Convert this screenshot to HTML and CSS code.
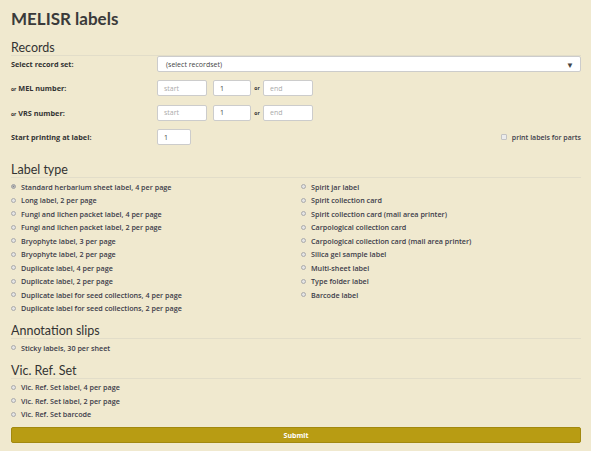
FILE: index.html
```html
<!DOCTYPE html>
<html>
<head>
<meta charset="utf-8">
<link rel="stylesheet" href="styles.css">
</head>
<body>
<div class="page">
  <h1 class="title">MELISR labels</h1>
  <form class="form">
    <h2 class="section">Records</h2>
    <div class="fields">
      <div class="row">
        <label class="lbl">Select record set:</label>
        <div class="select"><span>(select recordset)</span><span class="arrow">&#9660;</span></div>
      </div>
      <div class="row">
        <label class="lbl"><small>or</small> MEL number:</label>
        <div class="inline">
          <span class="box w50 ph">start</span>
          <span class="box w38">1</span>
          <small class="or">or</small>
          <span class="box w50 ph">end</span>
        </div>
      </div>
      <div class="row">
        <label class="lbl"><small>or</small> VRS number:</label>
        <div class="inline">
          <span class="box w50 ph">start</span>
          <span class="box w38">1</span>
          <small class="or">or</small>
          <span class="box w50 ph">end</span>
        </div>
      </div>
      <div class="row">
        <label class="lbl">Start printing at label:</label>
        <div class="inline grow">
          <span class="box w34">1</span>
          <label class="check"><span class="cb"></span>print labels for parts</label>
        </div>
      </div>
    </div>

    <h2 class="section gap">Label type</h2>
    <div class="radios cols">
      <div class="col">
        <label class="radio"><span class="rb on"></span>Standard herbarium sheet label, 4 per page</label>
        <label class="radio"><span class="rb"></span>Long label, 2 per page</label>
        <label class="radio"><span class="rb"></span>Fungi and lichen packet label, 4 per page</label>
        <label class="radio"><span class="rb"></span>Fungi and lichen packet label, 2 per page</label>
        <label class="radio"><span class="rb"></span>Bryophyte label, 3 per page</label>
        <label class="radio"><span class="rb"></span>Bryophyte label, 2 per page</label>
        <label class="radio"><span class="rb"></span>Duplicate label, 4 per page</label>
        <label class="radio"><span class="rb"></span>Duplicate label, 2 per page</label>
        <label class="radio"><span class="rb"></span>Duplicate label for seed collections, 4 per page</label>
        <label class="radio"><span class="rb"></span>Duplicate label for seed collections, 2 per page</label>
      </div>
      <div class="col">
        <label class="radio"><span class="rb"></span>Spirit jar label</label>
        <label class="radio"><span class="rb"></span>Spirit collection card</label>
        <label class="radio"><span class="rb"></span>Spirit collection card (mail area printer)</label>
        <label class="radio"><span class="rb"></span>Carpological collection card</label>
        <label class="radio"><span class="rb"></span>Carpological collection card (mail area printer)</label>
        <label class="radio"><span class="rb"></span>Silica gel sample label</label>
        <label class="radio"><span class="rb"></span>Multi-sheet label</label>
        <label class="radio"><span class="rb"></span>Type folder label</label>
        <label class="radio"><span class="rb"></span>Barcode label</label>
      </div>
    </div>

    <h2 class="section gap2">Annotation slips</h2>
    <div class="radios">
      <label class="radio"><span class="rb"></span>Sticky labels, 30 per sheet</label>
    </div>

    <h2 class="section gap2">Vic. Ref. Set</h2>
    <div class="radios">
      <label class="radio"><span class="rb"></span>Vic. Ref. Set label, 4 per page</label>
      <label class="radio"><span class="rb"></span>Vic. Ref. Set label, 2 per page</label>
      <label class="radio"><span class="rb"></span>Vic. Ref. Set barcode</label>
    </div>

    <div class="submit">Submit</div>
  </form>
</div>
</body>
</html>
```

FILE: styles.css
```css
html, body {
  margin: 0;
  padding: 0;
  background: #f0e9cf;
}
body {
  font-family: "Open Sans", Lato, sans-serif;
  color: #3c3c4a;
}
.page {
  padding: 9px 10px 0 11px;
}
.title {
  margin: 0;
  font-family: Lato, sans-serif;
  font-size: 17px;
  line-height: 20px;
  font-weight: 700;
  color: #3a3a3a;
}
.form {
  display: flex;
  flex-direction: column;
}
.section {
  margin: 11px 0 0;
  font-family: Lato, sans-serif;
  font-size: 12.5px;
  line-height: 15px;
  font-weight: 400;
  color: #333;
  border-bottom: 1px solid #e2ddc9;
}
.section.gap { margin-top: 17px; }
.section.gap2 { margin-top: 8px; }
.fields {
  display: flex;
  flex-direction: column;
  gap: 8.4px;
}
.row {
  display: flex;
  align-items: center;
  height: 16px;
}
.lbl {
  width: 146px;
  font-size: 7.3px;
  font-weight: 700;
  color: #333;
}
.lbl small, .or {
  font-size: 5px;
  font-weight: 700;
}
.select {
  flex: 1;
  height: 16px;
  box-sizing: border-box;
  border: 1px solid #ccc;
  border-radius: 2px;
  background: #fff;
  display: flex;
  align-items: center;
  justify-content: space-between;
  padding: 0 6px 0 8px;
  font-size: 7px;
  color: #444;
}
.arrow {
  font-size: 8px;
  color: #444;
}
.inline {
  display: flex;
  align-items: center;
}
.grow { flex: 1; }
.box {
  height: 16px;
  box-sizing: border-box;
  border: 1px solid #ccc;
  border-radius: 2px;
  background: #fff;
  display: flex;
  align-items: center;
  padding: 0 6px;
  font-size: 7px;
  color: #444;
}
.box.ph { color: #aaa; }
.w50 { width: 50px; }
.w38 { width: 38px; margin-left: 6px; }
.w34 { width: 34px; }
.or {
  width: 12px;
  text-align: center;
  color: #333;
}
.check {
  margin-left: auto;
  display: flex;
  align-items: center;
  font-size: 7px;
  font-weight: 600;
  color: #3c3c4a;
}
.cb {
  width: 4px;
  height: 4px;
  border: 1px solid #c3c3c3;
  background: #ececec;
  border-radius: 1px;
  margin-right: 5px;
}
.radios {
  padding-top: 2px;
}
.radios.cols {
  display: grid;
  grid-template-columns: 290px 1fr;
}
.radio {
  display: flex;
  align-items: center;
  height: 13.5px;
  font-size: 7.2px;
  font-weight: 600;
  color: #3c3c4a;
}
.rb {
  width: 3px;
  height: 3px;
  border: 1px solid #aaa;
  border-radius: 50%;
  background: #e4e4e4;
  margin: 0 5px 0 0;
  flex: none;
}
.rb.on {
  background: #888;
  box-shadow: inset 0 0 0 0.5px #ddd;
}
.submit {
  margin-top: 6px;
  height: 16px;
  box-sizing: border-box;
  background: #b89c13;
  border: 1px solid #a2890f;
  border-radius: 2px;
  color: #fff;
  font-size: 7px;
  font-weight: 700;
  display: flex;
  align-items: center;
  justify-content: center;
}
```
